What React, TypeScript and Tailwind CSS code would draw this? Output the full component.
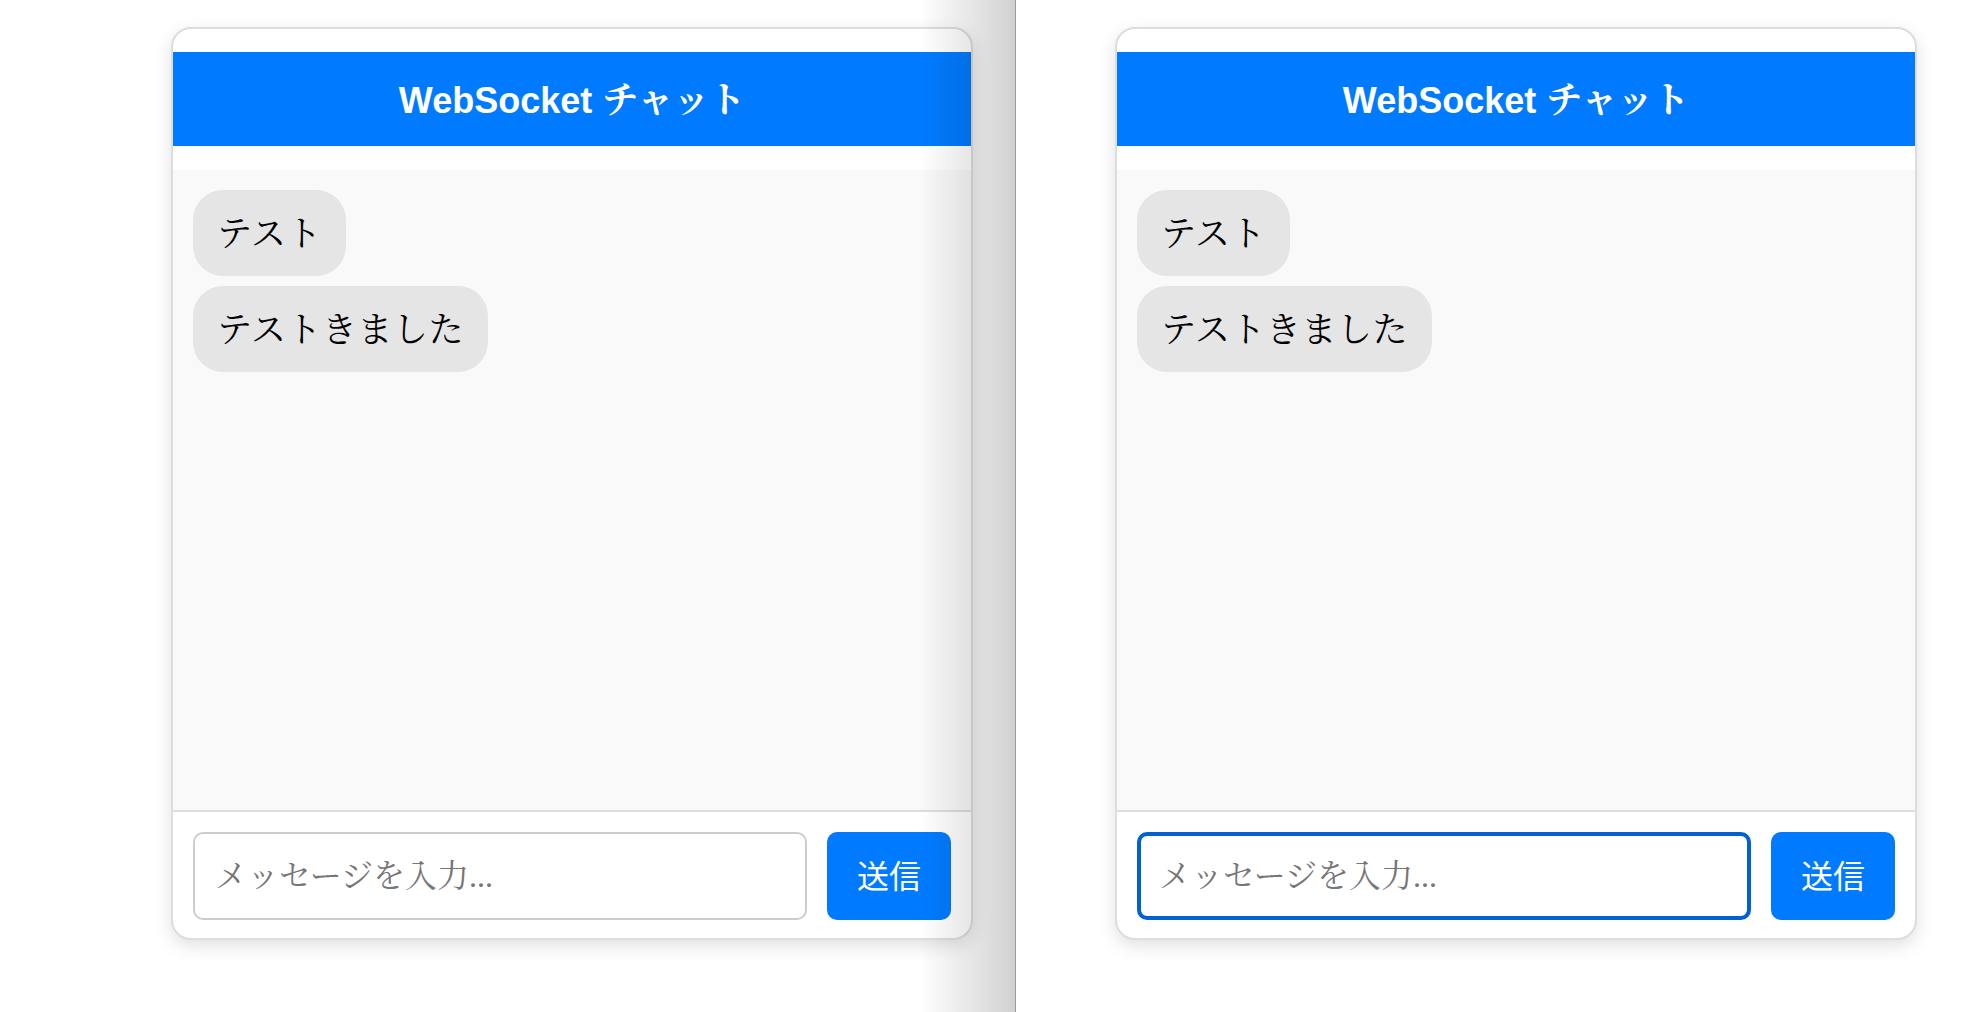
const messages = ['テスト', 'テストきました'];

function ChatCard({ focused = false }: { focused?: boolean }) {
  return (
    <div className="flex h-[913px] w-[802px] flex-col overflow-hidden rounded-[20px] border-2 border-[#dddddd] bg-white pt-[23px] shadow-[0_6px_18px_rgba(0,0,0,0.12)]">
      <div className="flex h-[94px] shrink-0 items-center justify-center bg-[#007bff] pt-[4px]">
        <h2 className="font-['Liberation_Sans','Noto_Serif_CJK_JP','Noto_Sans_CJK_JP',sans-serif] text-[36px] font-bold text-white">
          WebSocket チャット
        </h2>
      </div>
      <div className="h-[24px] shrink-0" />
      <div className="flex flex-1 flex-col items-start gap-[10px] bg-[#f9f9f9] p-[20px]">
        {messages.map((m) => (
          <div
            key={m}
            className="rounded-[30px] bg-[#e5e5e5] px-[24px] pt-[22px] pb-[18px] font-['Liberation_Serif','Noto_Serif_CJK_JP','Noto_Sans_CJK_JP',serif] text-[35px] leading-[46px] tracking-[0.5px] text-black"
          >
            {m}
          </div>
        ))}
      </div>
      <div className="flex shrink-0 gap-[20px] border-t-2 border-[#dddddd] px-[20px] pt-[20px] pb-[18px]">
        <input
          readOnly
          placeholder="メッセージを入力..."
          className={
            focused
              ? "h-[88px] min-w-0 flex-1 rounded-[10px] border-[4px] border-[#0062d1] bg-white px-[18px] font-['Liberation_Serif','Noto_Serif_CJK_JP','Noto_Sans_CJK_JP',serif] text-[32px] outline-none placeholder:text-[#767676]"
              : "h-[88px] min-w-0 flex-1 rounded-[10px] border-2 border-[#cccccc] bg-white px-[20px] font-['Liberation_Serif','Noto_Serif_CJK_JP','Noto_Sans_CJK_JP',serif] text-[32px] outline-none placeholder:text-[#767676]"
          }
        />
        <button className="h-[88px] w-[124px] rounded-[10px] bg-[#007bff] pb-[4px] font-['Noto_Sans_CJK_JP',sans-serif] text-[32px] text-white">
          送信
        </button>
      </div>
    </div>
  );
}

export default function App() {
  return (
    <div className="flex h-screen w-full overflow-hidden bg-white">
      <div className="relative w-[1015px] shrink-0 pt-[27px] pl-[171px]">
        <ChatCard />
        {/* shadow cast by the window on the right */}
        <div className="pointer-events-none absolute inset-y-0 right-0 w-[95px] bg-gradient-to-r from-black/0 to-black/[0.18]" />
      </div>
      <div className="w-px shrink-0 bg-[#9a9a9a]" />
      <div className="flex-1 pt-[27px] pl-[99px]">
        <ChatCard focused />
      </div>
    </div>
  );
}
